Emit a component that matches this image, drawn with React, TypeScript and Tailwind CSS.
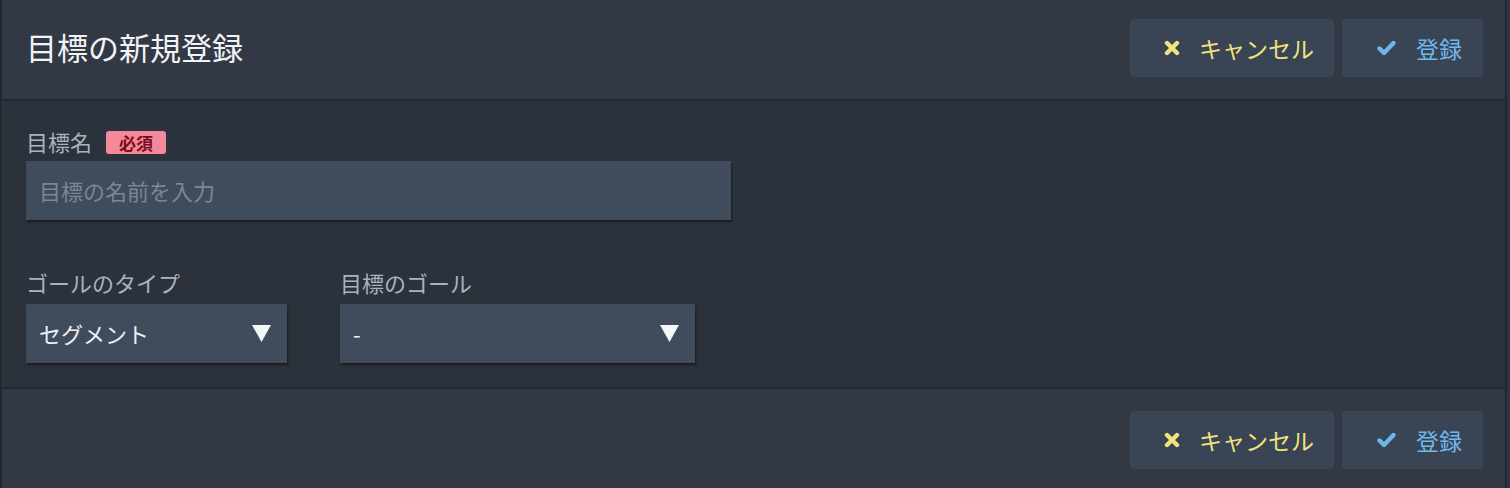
const font = { fontFamily: '"Noto Sans CJK JP", "Noto Sans", sans-serif' };

const CrossIcon: React.FC = () => (
    <svg width="16" height="16" viewBox="0 0 16 16" className="shrink-0">
        <path d="M3 3 L13 13 M13 3 L3 13" stroke="currentColor" strokeWidth="4.4" strokeLinecap="round" fill="none" />
    </svg>
);

const CheckIcon: React.FC = () => (
    <svg width="19" height="16" viewBox="0 0 19 16" className="shrink-0">
        <path d="M2.5 8.5 L7 13 L16.5 3" stroke="currentColor" strokeWidth="4.4" strokeLinecap="round" strokeLinejoin="round" fill="none" />
    </svg>
);

const ActionButtons: React.FC = () => {
    return (
        <div className="flex items-center gap-2">
            <button className="flex h-[58px] w-[204px] items-center justify-center gap-[19px] rounded-[3px] bg-[#394455] pl-[14px] text-[23px] text-[#f2e27c]">
                <CrossIcon />
                <span>キャンセル</span>
            </button>
            <button className="flex h-[58px] w-[141px] items-center justify-center gap-[20px] rounded-[3px] bg-[#394455] pl-[14px] text-[23px] text-[#6fb6ea]">
                <CheckIcon />
                <span>登録</span>
            </button>
        </div>
    );
};

const Triangle: React.FC = () => (
    <svg width="19" height="17" viewBox="0 0 19 17" className="shrink-0">
        <polygon points="0,0 19,0 9.5,17" fill="#f4f6f8" />
    </svg>
);

type SelectProps = { label: string; value: string; width: string };

const SelectField: React.FC<SelectProps> = ({ label, value, width }) => (
    <div className="flex flex-col">
        <div className="flex h-[23px] items-center">
            <span className="mb-[4px] text-[22px] leading-none text-[#a9b3c0]">{label}</span>
        </div>
        <div
            className={`mt-[9px] flex h-[59px] items-center justify-between bg-[#404b5b] pl-[13px] pr-[16px] text-[22px] text-[#eef0f3] shadow-[1px_2px_2px_rgba(0,0,0,0.45)] ${width}`}
        >
            <span>{value}</span>
            <Triangle />
        </div>
    </div>
);

export default function App() {
    return (
        <div className="flex h-[488px] w-full bg-[#2f3540]" style={font}>
            <div className="flex w-[1507px] flex-col border-x-2 border-[#222830]">
                <header className="flex h-[101px] items-start justify-between border-b-2 border-[#222830] bg-[#323945] pl-6 pr-[22px] pt-[19px]">
                    <h1 className="mt-[9px] text-[31px] leading-[38px] font-normal text-[#f1f3f5]">目標の新規登録</h1>
                    <ActionButtons />
                </header>
                <main className="flex flex-col bg-[#2c323c] px-6 pt-[30px] pb-[24px]">
                    <div className="flex h-[23px] items-center gap-[14px]">
                        <span className="mb-[4px] text-[22px] leading-none text-[#a9b3c0]">目標名</span>
                        <span className="flex h-[23px] w-[60px] items-center justify-center rounded-[3px] bg-[#f5899c] text-[17px] font-bold text-[#780d20]">
                            必須
                        </span>
                    </div>
                    <div className="mt-[7px] flex h-[59px] w-[705px] items-center bg-[#404b5b] pl-[13px] text-[22px] text-[#7c8694] shadow-[1px_2px_2px_rgba(0,0,0,0.45)]">
                        目標の名前を入力
                    </div>
                    <div className="mt-[52px] flex gap-[53px]">
                        <SelectField label="ゴールのタイプ" value="セグメント" width="w-[261px]" />
                        <SelectField label="目標のゴール" value="-" width="w-[355px]" />
                    </div>
                </main>
                <footer className="flex flex-1 items-start justify-end border-t-2 border-[#222830] bg-[#323945] pt-[22px] pr-[22px]">
                    <ActionButtons />
                </footer>
            </div>
        </div>
    );
}
